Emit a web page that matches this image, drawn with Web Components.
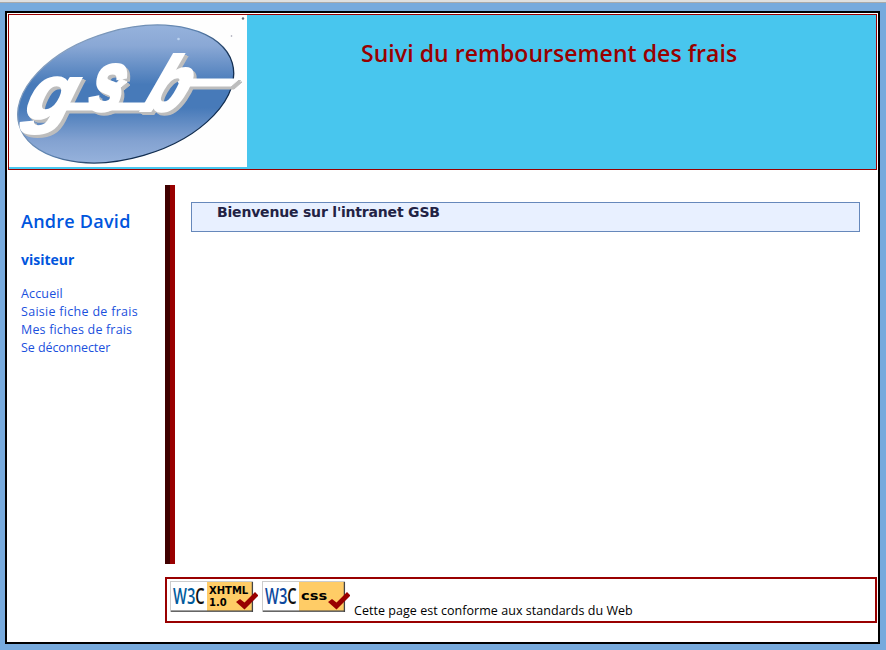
<!DOCTYPE html>
<html lang="fr">
<head>
<meta charset="utf-8">
<title>Intranet GSB</title>
<style>
html{height:100%;background:#77aadd}
body{margin:0;height:650px;overflow:hidden;font-family:"Open Sans","Noto Sans",sans-serif}
</style>
</head>
<body>
<gsb-page>
  <gsb-header slot="header">Suivi du remboursement des frais</gsb-header>
  <gsb-menu slot="menu"></gsb-menu>
  <gsb-banner slot="main">Bienvenue sur l'intranet GSB</gsb-banner>
  <gsb-footer slot="footer">Cette page est conforme aux standards du Web</gsb-footer>
</gsb-page>
<script>
const define = (name, html) => customElements.define(name, class extends HTMLElement {
  constructor() {
    super();
    const t = document.createElement('template');
    t.innerHTML = html;
    this.attachShadow({mode: 'open'}).append(t.content.cloneNode(true));
  }
});

define('gsb-page', `<style>
:host{display:block;box-sizing:border-box;height:650px;padding:8px 6px 6px 5px;border-top:2px solid #e0e0e0;background:linear-gradient(#aaa 1px,#77aadd 1px)}
.frame{box-sizing:border-box;margin-top:1px;width:875px;height:633px;border:2px solid #000;background:#fff;padding:1px}
.grid{display:grid;grid-template-columns:157px 712px;grid-template-rows:379px 46px;row-gap:13px;margin-top:15px}
.bar{box-sizing:border-box;border-left:5px solid #400000;padding:17px 17px 0 21px;background:linear-gradient(to right,#990000 5px,transparent 5px)}
.foot{grid-column:2}
</style>
<div class="frame">
  <slot name="header"></slot>
  <div class="grid"><slot name="menu"></slot><div class="bar"><slot name="main"></slot></div><div class="foot"><slot name="footer"></slot></div></div>
</div>`);

define('gsb-logo', `<style>:host{display:block;width:238px;height:152px}svg{display:block}
text{font-weight:bold;font-style:italic;font-family:"Liberation Sans",sans-serif}</style>
<svg width="238" height="152" viewBox="9 15 238 152">
<defs>
<linearGradient id="g" x1="0" y1="25" x2="0" y2="163" gradientUnits="userSpaceOnUse" gradientTransform="rotate(16.3 125.7 94)"><stop offset="0" stop-color="#96b2dc"/><stop offset=".15" stop-color="#8aa8d5"/><stop offset=".43" stop-color="#477ab9"/><stop offset=".6" stop-color="#477ab9"/><stop offset=".84" stop-color="#83a2d1"/><stop offset="1" stop-color="#96b2dc"/></linearGradient>
<linearGradient id="e" x1="90" y1="30" x2="150" y2="160" gradientUnits="userSpaceOnUse"><stop offset="0" stop-color="#839dbd"/><stop offset=".5" stop-color="#5b81ae"/><stop offset=".8" stop-color="#112d50"/></linearGradient>
<g id="w">
<text transform="translate(23 118) skewX(-16) scale(1.04 1)" font-size="75" stroke-width="3">g</text>
<text transform="translate(87 110) skewX(-12) scale(.72 1)" font-size="84" stroke-width="4">s</text>
<text transform="translate(141 110) skewX(-22) scale(.86 1)" font-size="76" stroke-width="4">b</text>
<path d="M66 103H89Q93 96 101 101L117 103H155L152 110H64Z M178 82Q182 79 193 79H239L231 86H188Z M105 93L121 79L127 82L111 95Z"/>
</g></defs>
<rect x="9" y="15" width="238" height="152" fill="#fefefe"/>
<ellipse cx="125.7" cy="94" rx="111" ry="64" transform="rotate(-16.3 125.7 94)" fill="url(#g)" stroke="url(#e)" stroke-width="1.3"/>
<use href="#w" x="3" y="3" fill="#bdbdbd" stroke="#bdbdbd"/><use href="#w" x="1.5" y="1.5" fill="#bdbdbd" stroke="#bdbdbd"/>
<use href="#w" fill="#fff" stroke="#fff"/>
<circle cx="243" cy="18.5" r="1.2" fill="#667"/><circle cx="231.5" cy="36" r=".8" fill="#99a"/><circle cx="178.5" cy="39" r="1.3" fill="#bdd3ef"/>
</svg>`);

define('gsb-header', `<style>
:host{display:flex;box-sizing:border-box;width:869px;height:156px;border:1px solid #990000;background:#48c6ee;align-items:flex-start}
h1{margin:21px 0 0 114px;font:600 23px/34px "Open Sans",sans-serif;color:#990000;white-space:nowrap;letter-spacing:.05px}
</style><gsb-logo></gsb-logo><h1><slot></slot></h1>`);

define('gsb-menu', `<style>
:host{display:block;padding:23px 0 0 13px;color:#0055dd;white-space:nowrap}
h2{margin:0;font:600 18px/26px "Open Sans",sans-serif;letter-spacing:.25px}
h3{margin:16px 0 0;font:700 14px/20px "Open Sans",sans-serif}
ul{list-style:none;margin:15px 0 0;padding:0;font-size:12.5px;line-height:18px}
li:nth-child(1){letter-spacing:.15px}li:nth-child(2){letter-spacing:.29px}li:nth-child(3){letter-spacing:.17px}li:nth-child(4){letter-spacing:-.07px}
a{color:#1a50dd;text-decoration:none}
</style><h2>Andre David</h2><h3>visiteur</h3>
<ul><li><a>Accueil</a></li><li><a>Saisie fiche de frais</a></li><li><a>Mes fiches de frais</a></li><li><a>Se déconnecter</a></li></ul>`);

define('gsb-banner', `<style>
:host{display:block;box-sizing:border-box;width:669px;height:30px;border:1px solid #6688bb;background:#e8f0ff;padding-left:25px;font:bold 14px/18px "DejaVu Sans",sans-serif;letter-spacing:-.19px;color:#222244;white-space:nowrap}
</style><slot></slot>`);

customElements.define('w3c-badge', class extends HTMLElement {
  constructor() {
    super();
    const css = this.getAttribute('kind') === 'css';
    const blue = css ? '#0c479d' : '#005a9c';
    const label = css
      ? '<text transform="translate(39 18.5) scale(1.22 1)" font-size="12">css</text>'
      : '<text x="39" y="13" font-size="10">XHTML</text><text x="39" y="24.5" font-size="10">1.0</text>';
    this.attachShadow({mode: 'open'}).innerHTML = `<style>:host{display:block;width:88px;height:31px}svg{display:block}text{font-family:"DejaVu Sans",sans-serif;font-weight:bold}.w{font-family:"Open Sans",sans-serif;font-weight:600}</style>
<svg width="88" height="31" viewBox="0 0 88 31">
<defs><linearGradient id="w" gradientUnits="userSpaceOnUse" x1="0" y1="0" x2="62" y2="0"><stop offset=".5" stop-color="${blue}"/><stop offset=".5" stop-color="#111"/></linearGradient></defs>
<rect width="83" height="31" fill="#ccc"/><rect x="1" y="1" width="81" height="29" fill="#fff"/><rect x="37" y="1" width="45" height="29" fill="#ffcc66"/>
<path d="M1 30.2H83M82.4 1V31" stroke="#444" stroke-width="1.3" fill="none"/>
<text class="w" transform="translate(3 22.5) scale(.7 1)" font-size="21" fill="url(#w)">W3C</text>
${label}
<path d="M66 21L70 18L74.5 21.5L85 11L88.5 14.5L74.5 28.5Z" fill="#900"/></svg>`;
  }
});

define('gsb-footer', `<style>
:host{display:flex;box-sizing:border-box;width:712px;height:46px;border:2px solid #990000;padding:2px 0 0 3px;gap:4px;color:#000;white-space:nowrap;font-size:12.5px;line-height:18px;letter-spacing:.04px}
w3c-badge{letter-spacing:0}
span{margin-top:21px}
</style><w3c-badge kind="xhtml"></w3c-badge><w3c-badge kind="css"></w3c-badge><span><slot></slot></span>`);
</script>
</body>
</html>
